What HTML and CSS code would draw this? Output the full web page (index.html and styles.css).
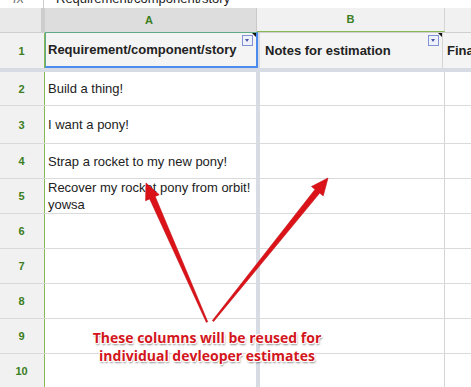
FILE: index.html
```html
<!DOCTYPE html>
<html lang="en">
<head>
  <meta charset="UTF-8" />
  <meta name="viewport" content="width=device-width, initial-scale=1.0">
  <title>Estimates sheet</title>
  <link rel="stylesheet" href="styles.css">
</head>
<body>
  <div class="formula-bar">
    <span class="fx">fx</span>
    <span class="formula-text">Requirement/component/story</span>
  </div>

  <div class="sheet">
    <div class="row col-headers">
      <div class="rownum corner"></div>
      <div class="cell col-a">A</div>
      <div class="cell col-b">B</div>
      <div class="cell col-c"></div>
    </div>
    <div class="row frozen">
      <div class="rownum">1</div>
      <div class="cell col-a active">Requirement/component/story<span class="filter"></span><span class="note"></span></div>
      <div class="cell col-b">Notes for estimation<span class="filter"></span><span class="note"></span></div>
      <div class="cell col-c">Final</div>
    </div>
    <div class="row r2">
      <div class="rownum">2</div>
      <div class="cell col-a">Build a thing!</div>
      <div class="cell col-b"></div>
      <div class="cell col-c"></div>
    </div>
    <div class="row r3">
      <div class="rownum">3</div>
      <div class="cell col-a">I want a pony!</div>
      <div class="cell col-b"></div>
      <div class="cell col-c"></div>
    </div>
    <div class="row">
      <div class="rownum">4</div>
      <div class="cell col-a">Strap a rocket to my new pony!</div>
      <div class="cell col-b"></div>
      <div class="cell col-c"></div>
    </div>
    <div class="row">
      <div class="rownum">5</div>
      <div class="cell col-a">Recover my rocket pony from orbit!<br>yowsa</div>
      <div class="cell col-b"></div>
      <div class="cell col-c"></div>
    </div>
    <div class="row">
      <div class="rownum">6</div>
      <div class="cell col-a"></div>
      <div class="cell col-b"></div>
      <div class="cell col-c"></div>
    </div>
    <div class="row">
      <div class="rownum">7</div>
      <div class="cell col-a"></div>
      <div class="cell col-b"></div>
      <div class="cell col-c"></div>
    </div>
    <div class="row">
      <div class="rownum">8</div>
      <div class="cell col-a"></div>
      <div class="cell col-b"></div>
      <div class="cell col-c"></div>
    </div>
    <div class="row">
      <div class="rownum">9</div>
      <div class="cell col-a"></div>
      <div class="cell col-b"></div>
      <div class="cell col-c"></div>
    </div>
    <div class="row">
      <div class="rownum">10</div>
      <div class="cell col-a"></div>
      <div class="cell col-b"></div>
      <div class="cell col-c"></div>
    </div>
  </div>

  <!-- skitch style annotation on top of the sheet -->
  <svg class="arrows" width="471" height="387" viewBox="0 0 471 387">
    <polygon class="arrow" points="206.3,322.3 149.7,198.9 145.6,200.7 146,183 159.2,194.7 155.2,196.5 207.7,321.7" />
    <polygon class="arrow" points="212.4,320.5 315.0,189.4 311.5,186.5 328,178 323.2,195.9 319.7,193.1 213.6,321.5" />
  </svg>
  <div class="callout">These columns will be reused for<br>individual devleoper estimates</div>
</body>
</html>
```

FILE: styles.css
```css
body {
  margin: 0;
  font-family: "Liberation Sans", Arial, sans-serif;
  font-size: 13px;
  color: #222;
  background: #fff;
  width: 471px;
  height: 387px;
  overflow: hidden;
  position: relative;
}
.formula-bar {
  height: 8px;
  overflow: hidden;
  display: flex;
  background: #fff;
}
.formula-bar span {
  display: block;
  line-height: 17px;
  margin-top: -10px;
}
.fx {
  width: 44px;
  padding-left: 13px;
  box-sizing: border-box;
  color: #777;
  font-size: 14px;
  font-style: italic;
  border-right: 1px solid #ccc;
}
.formula-text {
  padding-left: 12px;
}
.row {
  display: flex;
  height: 35px;
  box-sizing: border-box;
  border-bottom: 1px solid #dadada;
}
.r2 { height: 34px; }
.r3 { height: 38px; }
.rownum {
  width: 45px;
  flex: none;
  box-sizing: border-box;
  background: #f1f1f1;
  border-right: 1px solid #86b853;
  color: #3a7d22;
  font-weight: bold;
  font-size: 11px;
  display: flex;
  align-items: center;
  justify-content: center;
  padding-right: 1px;
}
.cell {
  box-sizing: border-box;
  display: flex;
  align-items: center;
  padding-left: 3px;
  line-height: 17px;
  white-space: nowrap;
  overflow: hidden;
  position: relative;
}
.col-a {
  width: 215px;
  flex: none;
  border-right: 4px solid #d6dbe4;
}
.col-b {
  width: 185px;
  flex: none;
  border-right: 1px solid #d4d4d4;
  padding-left: 5px;
}
.col-c {
  flex: 1;
  padding-left: 4px;
}

/* column letters */
.col-headers {
  height: 25px;
  background: #f1f1f1;
  border-bottom: 1px solid #cfcfcf;
}
.col-headers .cell {
  justify-content: center;
  color: #3a7d22;
  font-weight: bold;
  font-size: 11px;
  padding: 0;
}
.col-headers .col-a {
  background: #dddddd;
  border-right: 1px solid #c9c9c9;
  width: 212px;
  padding-right: 3px;
}
.col-headers .col-b {
  width: 188px;
  border-bottom: 1px solid #86b853;
}
.corner {
  background: #e9e9e9;
  border-right: 4px solid #cdcdcd;
}

/* frozen header row */
.frozen {
  border-bottom: 4px solid #d6dbe4;
  height: 39px;
}
.frozen .cell {
  background: #f4f4f4;
  font-weight: bold;
}
.frozen .col-a.active {
  border-right: 2px solid #4d8af0;
  border-bottom: 2px solid #4d8af0;
  border-left: 1px solid #5fa888;
  border-top: 1px solid #5fa888;
  margin-top: -1px;
  width: 213px;
  padding-left: 2px;
  height: 36px;
  align-self: flex-start;
}
.frozen .col-a.active + .col-b {
  border-left: 2px solid #d6dbe4;
}
.filter {
  position: absolute;
  right: 3px;
  top: 2px;
  width: 9px;
  height: 9px;
  border: 1px solid #8191d6;
  background: #f0f2fb;
}
.filter::after {
  content: "";
  position: absolute;
  left: 2px;
  top: 3px;
  border-left: 2.5px solid transparent;
  border-right: 2.5px solid transparent;
  border-top: 3px solid #4a5aa8;
}
.note {
  position: absolute;
  right: 0;
  top: 0;
  border-left: 4px solid transparent;
  border-top: 4px solid #111;
}

/* annotation layer */
.arrows {
  position: absolute;
  left: 0;
  top: 0;
}
.arrow {
  fill: #dc1219;
  stroke: #c20d13;
  stroke-width: 0.6;
  stroke-linejoin: round;
}
.callout {
  position: absolute;
  left: 60px;
  top: 329px;
  width: 294px;
  text-align: center;
  font-family: "Open Sans", "DejaVu Sans", sans-serif;
  font-weight: bold;
  font-size: 14px;
  line-height: 18px;
  color: #d3161d;
  text-shadow: 0 0 1px #fff, 1px 1px 0 #fff, -1px -1px 0 #fff, 1px -1px 0 #fff, -1px 1px 0 #fff, 1px 2px 2px rgba(0,0,0,0.5);
}
```
